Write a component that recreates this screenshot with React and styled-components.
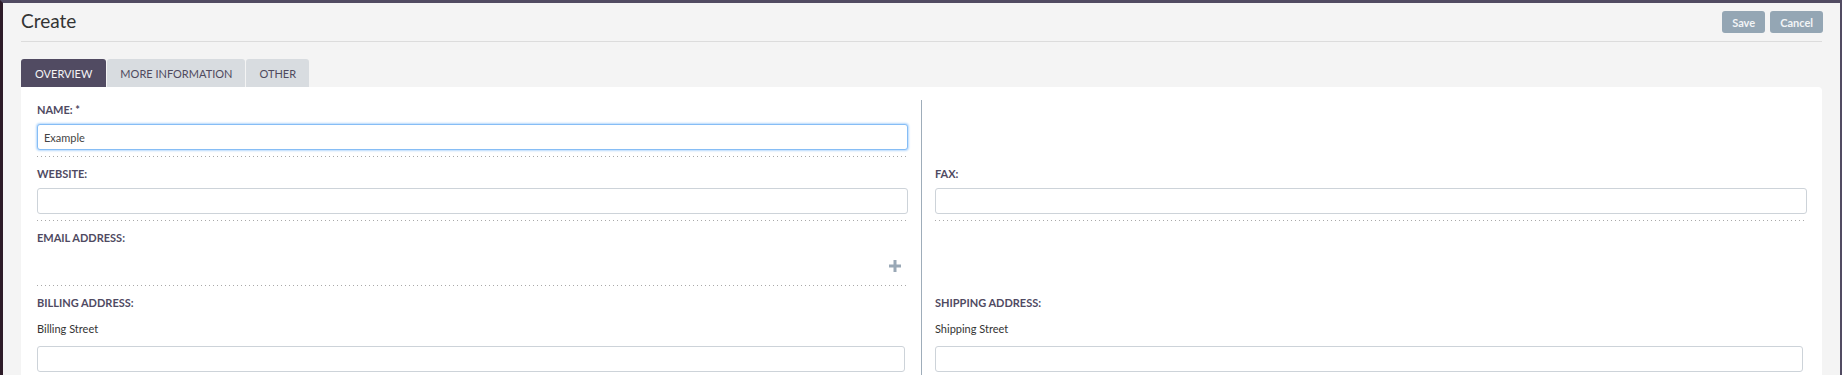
import React from 'react'
import styled, { createGlobalStyle } from 'styled-components'

const GlobalStyle = createGlobalStyle`
    html, body {
        margin: 0;
        padding: 0;
        overflow: hidden;
    }
    body {
        font-family: Lato, "Open Sans", sans-serif;
        background: #f4f4f4;
    }
`

const Frame = styled.div`
    min-height: 100vh;
    box-sizing: border-box;
    background: #f4f4f4;
    border-top: 3px solid #514b62;
    border-left: 3px solid #2d1b28;
    border-right: 2px solid #514b62;
    padding: 0 18px 0 18px;
`

const Header = styled.div`
    display: flex;
    align-items: center;
    justify-content: space-between;
    height: 38px;
    border-bottom: 1px solid #dcdcdc;
`

const Title = styled.h2`
    margin: 0 0 4px 0;
    font-weight: 400;
    font-size: 19px;
    color: #333;
`

const Actions = styled.div`
    display: flex;
    gap: 5px;
    margin-right: -1px;
`

const Button = styled.button`
    height: 22px;
    padding: 0 10px;
    border: none;
    border-radius: 3px;
    background: #94a6b4;
    color: #f2f4f6;
    font-family: Lato, sans-serif;
    font-weight: 700;
    font-size: 11px;
    cursor: pointer;
`

const Tabs = styled.div`
    display: flex;
    gap: 1px;
    margin-top: 17px;
`

const Tab = styled.div`
    height: 28px;
    padding: 0 ${(p) => p.$pad}px;
    display: flex;
    align-items: center;
    border-radius: 3px 3px 0 0;
    font-size: 11px;
    text-transform: uppercase;
    background: ${(p) => (p.$active ? '#514b62' : '#d8dce0')};
    color: ${(p) => (p.$active ? '#f4f4f6' : '#4f4a5e')};
`

const Panel = styled.div`
    background: #fff;
    border-radius: 0 4px 0 0;
    padding: 13px 15px 40px 16px;
`

const Row = styled.div`
    display: grid;
    grid-template-columns: 1fr 1fr;
`

const Cell = styled.div`
    box-sizing: border-box;
    ${(p) =>
        p.$left
            ? 'padding-right: 13px; border-right: 1px solid #9fadba;'
            : 'padding-left: 13px;'}
`

const Field = styled.div`
    padding: ${(p) => (p.$first ? 2 : 9)}px ${(p) => p.$inset || 0}px 6px 0;
    ${(p) =>
        p.$dotted &&
        `
        background-image: linear-gradient(to right, #a9a9a9 1px, transparent 1px);
        background-size: 4px 1px;
        background-repeat: repeat-x;
        background-position: left bottom;
        padding-bottom: 7px;
    `}
`

const Label = styled.div`
    font-size: 11px;
    line-height: 16px;
    font-weight: 700;
    color: #4f4a62;
    text-transform: uppercase;
    margin-bottom: 6px;
`

const SubLabel = styled.div`
    font-size: 11px;
    line-height: 16px;
    color: #333;
    margin: 10px 0 9px;
`

const Input = styled.input`
    display: block;
    width: 100%;
    height: 26px;
    box-sizing: border-box;
    border-radius: 3px;
    padding: 0 6px;
    font-family: Lato, sans-serif;
    font-size: 11px;
    color: #444;
    outline: none;
    border: 1px solid ${(p) => (p.$focus ? '#86bdf5' : '#cdd3d9')};
    box-shadow: ${(p) => (p.$focus ? '0 0 2px 1px #b7d9fc' : 'none')};
`

const AddRow = styled.div`
    box-sizing: border-box;
    height: 27px;
    padding: 1px 7px 0 0;
    display: flex;
    align-items: center;
    justify-content: flex-end;
`

const PlusIcon = () => (
    <svg width="12" height="12" viewBox="0 0 12 12">
        <path d="M6 0v12M0 6h12" stroke="#99a8b6" strokeWidth="3" />
    </svg>
)

const App = () => (
    <>
        <GlobalStyle />
        <Frame>
            <Header>
                <Title>Create</Title>
                <Actions>
                    <Button>Save</Button>
                    <Button>Cancel</Button>
                </Actions>
            </Header>
            <Tabs>
                <Tab $active $pad={14}>Overview</Tab>
                <Tab $pad={13}>More Information</Tab>
                <Tab $pad={13}>Other</Tab>
            </Tabs>
            <Panel>
                <Row>
                    <Cell $left>
                        <Field $first $dotted>
                            <Label>Name: *</Label>
                            <Input $focus defaultValue="Example" />
                        </Field>
                    </Cell>
                    <Cell />
                </Row>
                <Row>
                    <Cell $left>
                        <Field $dotted>
                            <Label>Website:</Label>
                            <Input />
                        </Field>
                    </Cell>
                    <Cell>
                        <Field $dotted>
                            <Label>Fax:</Label>
                            <Input />
                        </Field>
                    </Cell>
                </Row>
                <Row>
                    <Cell $left>
                        <Field $dotted>
                            <Label>Email Address:</Label>
                            <AddRow>
                                <PlusIcon />
                            </AddRow>
                        </Field>
                    </Cell>
                    <Cell />
                </Row>
                <Row>
                    <Cell $left>
                        <Field $inset={3}>
                            <Label>Billing Address:</Label>
                            <SubLabel>Billing Street</SubLabel>
                            <Input />
                        </Field>
                    </Cell>
                    <Cell>
                        <Field $inset={4}>
                            <Label>Shipping Address:</Label>
                            <SubLabel>Shipping Street</SubLabel>
                            <Input />
                        </Field>
                    </Cell>
                </Row>
            </Panel>
        </Frame>
    </>
)

export default App
